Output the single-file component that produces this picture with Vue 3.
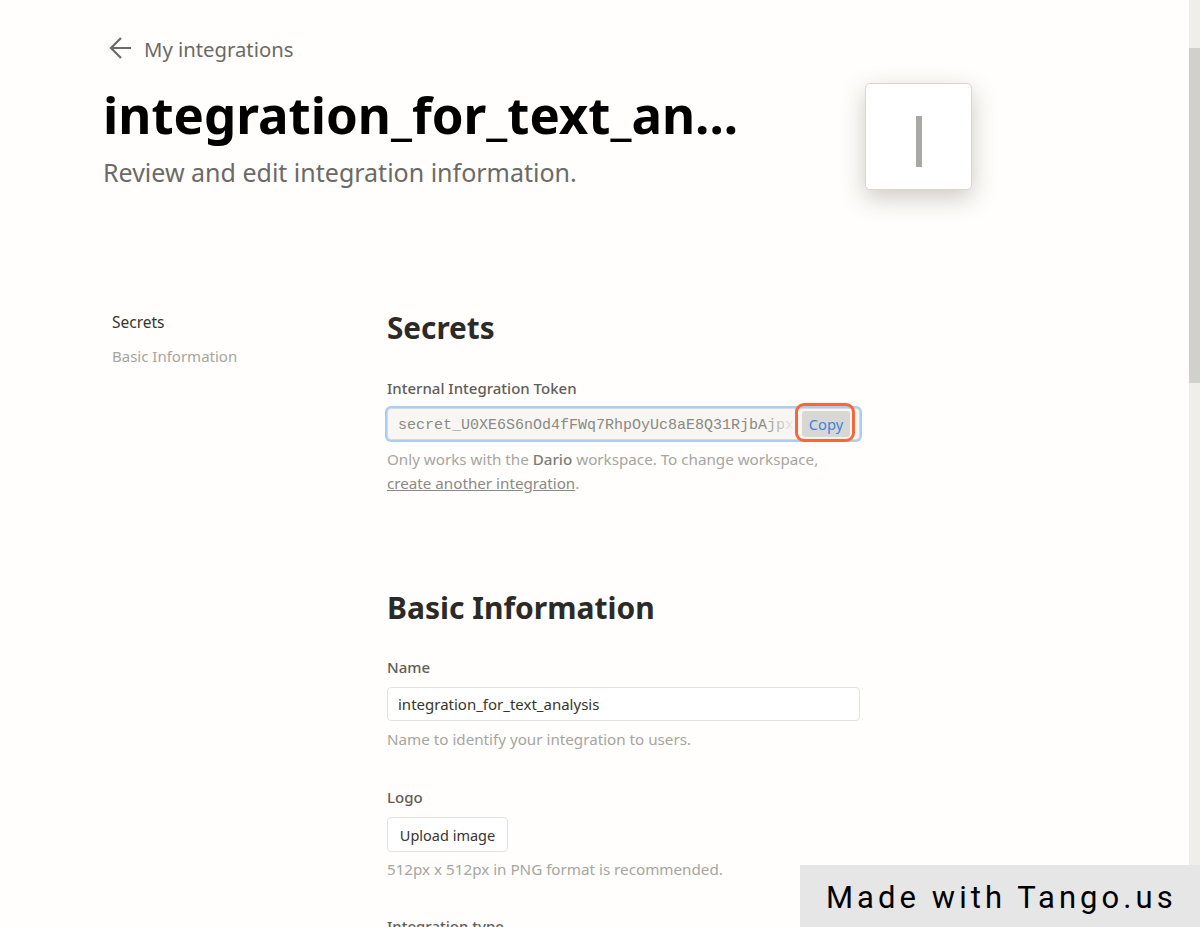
<template>
  <div class="page">
    <header class="head">
      <a class="back">
        <svg class="back-icon" width="26" height="26" viewBox="0 0 26 26" fill="none">
          <path d="M24 12H4M14 2L4 12L14 22" stroke="#6b6a67" stroke-width="2.2" />
        </svg>
        <span>My integrations</span>
      </a>
      <div class="head-row">
        <div class="head-text">
          <h1>integration_for_text_an...</h1>
          <p class="sub">Review and edit integration information.</p>
        </div>
        <div class="logo"><span class="logo-bar"></span></div>
      </div>
    </header>

    <div class="body">
      <nav class="side">
        <a class="side-item active">Secrets</a>
        <a class="side-item">Basic Information</a>
      </nav>
      <main class="content">
        <section class="secrets">
          <h2 class="h-small">Secrets</h2>
          <label class="label">Internal Integration Token</label>
          <div class="token">
            <span class="token-text">secret_U0XE6S6nOd4fFWq7RhpOyUc8aE8Q31RjbAjpx</span>
            <span class="token-fade"></span>
            <button class="copy">Copy</button>
            <span class="highlight"></span>
          </div>
          <p class="hint">Only works with the <b>Dario</b> workspace. To change workspace,<br /><u>create another integration</u>.</p>
        </section>

        <section class="basic">
          <h2 class="h-big">Basic Information</h2>
          <label class="label">Name</label>
          <div class="input">integration_for_text_analysis</div>
          <p class="hint hint-name">Name to identify your integration to users.</p>

          <label class="label label-logo">Logo</label>
          <button class="upload">Upload image</button>
          <p class="hint hint-logo">512px x 512px in PNG format is recommended.</p>

          <label class="label label-type">Integration type</label>
        </section>
      </main>
    </div>

    <div class="scrollbar"><div class="thumb"></div></div>
    <div class="tango">Made with Tango.us</div>
  </div>
</template>

<script setup>
</script>

<style>
html, body {
  margin: 0;
  background: #fffefc;
  overflow: hidden;
}
</style>

<style scoped>
.page {
  position: relative;
  width: 1200px;
  height: 927px;
  overflow: hidden;
  background: #fffefc;
  font-family: "Noto Sans", "Open Sans", sans-serif;
  color: #37352f;
}

.head {
  padding: 34px 0 0 104px;
}

.back {
  display: flex;
  align-items: center;
  gap: 11px;
  height: 30px;
  padding-left: 3px;
  font-size: 20.3px;
  color: #6b6a67;
}

.head-row {
  display: flex;
  align-items: flex-start;
}

.head-text {
  width: 761px;
  flex: none;
}

h1 {
  margin: 15px 0 0 -1px;
  font-size: 51px;
  line-height: 70px;
  font-weight: 700;
  color: #000;
  white-space: nowrap;
}

.sub {
  margin: 7px 0 0 -1px;
  font-size: 25px;
  line-height: 32px;
  color: #6b6a67;
}

.logo {
  width: 107px;
  height: 107px;
  margin-top: 19px;
  padding-top: 10px;
  box-sizing: border-box;
  display: flex;
  align-items: center;
  justify-content: center;
  background: #fff;
  border: 1px solid #d9d6d0;
  border-radius: 5px;
  box-shadow: 0 8px 24px rgba(80, 70, 50, 0.28);
}

.logo-bar {
  width: 6px;
  height: 51px;
  background: #a8a8a6;
}

.body {
  display: flex;
  margin-top: 118px;
}

.side {
  width: 387px;
  flex: none;
  padding: 3px 0 0 112px;
  box-sizing: border-box;
  display: flex;
  flex-direction: column;
  gap: 12px;
  font-size: 15px;
}

.side-item {
  line-height: 22px;
  color: #a6a5a1;
}

.side-item.active {
  font-size: 15.5px;
  color: #37352f;
}

.content {
  width: 473px;
}

h2 {
  margin: 0;
  font-weight: 700;
  color: #2b2a26;
}

.h-small {
  font-size: 29.7px;
  line-height: 40px;
}

.h-big {
  font-size: 30px;
  line-height: 42px;
}

.label {
  display: block;
  font-size: 15px;
  line-height: 22px;
  font-weight: 500;
  color: #5f5d58;
}

.secrets .label {
  margin-top: 29px;
}

.token {
  position: relative;
  display: flex;
  align-items: center;
  box-sizing: border-box;
  height: 32px;
  margin-top: 9px;
  padding: 2px 0 0 10px;
  background: #f7f6f3;
  border: 1px solid #d9d8d4;
  border-radius: 4px;
  box-shadow: 0 0 0 2px #a9cdf5;
}

.token-text {
  white-space: nowrap;
  font-family: "Liberation Mono", monospace;
  font-size: 15px;
  color: #8a8985;
}

.token-fade {
  position: absolute;
  left: 375px;
  top: 0;
  width: 33px;
  height: 30px;
  background: linear-gradient(to right, rgba(247, 246, 243, 0), #f7f6f3);
}

.copy {
  position: absolute;
  left: 414px;
  top: 2px;
  width: 48px;
  height: 26px;
  padding: 0;
  border: 0;
  border-radius: 3px;
  background: #d8d7d3;
  color: #3a85e0;
  font-family: inherit;
  font-size: 14.7px;
}

.highlight {
  position: absolute;
  left: 407px;
  top: -6px;
  width: 60px;
  height: 39px;
  box-sizing: border-box;
  border: 3px solid #f5683a;
  border-radius: 9px;
}

.hint {
  margin: 7px 0 0;
  font-size: 15.2px;
  line-height: 24px;
  color: #a6a5a1;
}

.hint b {
  font-weight: 500;
  color: #7d7c78;
}

.hint u {
  color: #8a8985;
}

.basic {
  margin-top: 92px;
}

.basic .label {
  margin-top: 27px;
}

.input {
  height: 32px;
  margin-top: 9px;
  padding-left: 10px;
  line-height: 32px;
  font-size: 15px;
  background: #fff;
  border: 1px solid #e3e2df;
  border-radius: 4px;
}

.hint-name {
  margin-top: 6px;
}

.basic .label-logo {
  margin-top: 35px;
}

.upload {
  display: block;
  width: 121px;
  height: 35px;
  margin-top: 9px;
  padding: 0;
  background: #fff;
  border: 1px solid #e3e2df;
  border-radius: 4px;
  font-family: inherit;
  font-size: 14.5px;
  color: #37352f;
}

.hint-logo {
  margin-top: 5px;
}

.basic .label-type {
  margin-top: 34px;
}

.scrollbar {
  position: absolute;
  right: 0;
  top: 0;
  width: 11px;
  height: 927px;
  background: #eeeeeb;
}

.thumb {
  margin-top: 48px;
  height: 335px;
  background: #d0d0cc;
}

.tango {
  position: absolute;
  right: 0;
  bottom: 0;
  width: 400px;
  height: 62px;
  box-sizing: border-box;
  padding-left: 26px;
  background: #e6e6e6;
  color: #000;
  font-family: Roboto, sans-serif;
  font-size: 31px;
  line-height: 66px;
  letter-spacing: 4.05px;
  white-space: nowrap;
}
</style>
